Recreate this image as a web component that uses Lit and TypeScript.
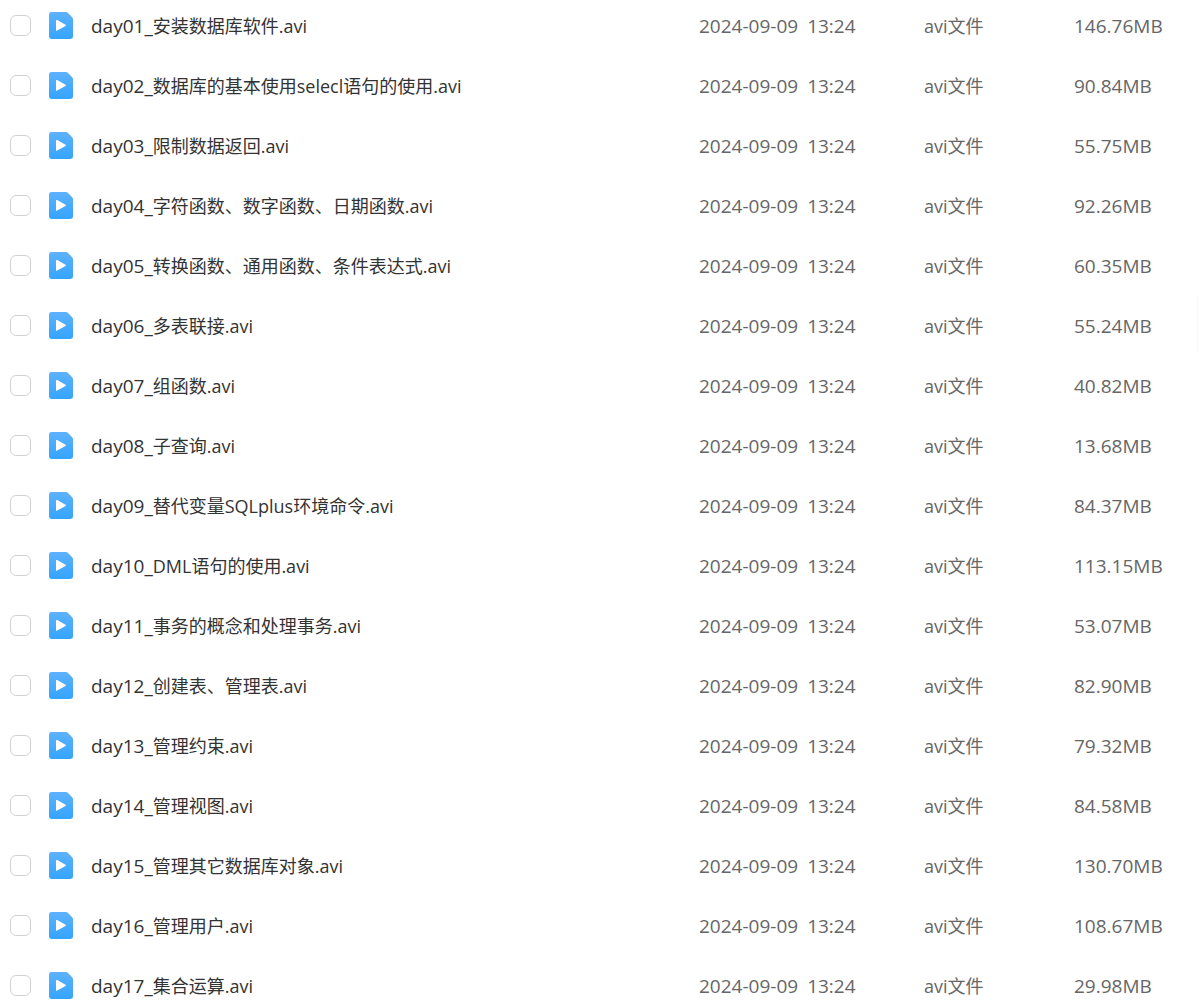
import { LitElement, html, css } from "lit";
import { customElement, state } from "lit/decorators.js";

interface FileEntry {
  day: string;
  title: string;
  date: string;
  time: string;
  kind: string;
  size: string;
}

const entry = (day: string, title: string, size: string): FileEntry => ({
  day,
  title,
  date: "2024-09-09",
  time: "13:24",
  kind: "avi文件",
  size,
});

const FILES: FileEntry[] = [
  entry("day01_", "安装数据库软件.avi", "146.76MB"),
  entry("day02_", "数据库的基本使用selecl语句的使用.avi", "90.84MB"),
  entry("day03_", "限制数据返回.avi", "55.75MB"),
  entry("day04_", "字符函数、数字函数、日期函数.avi", "92.26MB"),
  entry("day05_", "转换函数、通用函数、条件表达式.avi", "60.35MB"),
  entry("day06_", "多表联接.avi", "55.24MB"),
  entry("day07_", "组函数.avi", "40.82MB"),
  entry("day08_", "子查询.avi", "13.68MB"),
  entry("day09_", "替代变量SQLplus环境命令.avi", "84.37MB"),
  entry("day10_", "DML语句的使用.avi", "113.15MB"),
  entry("day11_", "事务的概念和处理事务.avi", "53.07MB"),
  entry("day12_", "创建表、管理表.avi", "82.90MB"),
  entry("day13_", "管理约束.avi", "79.32MB"),
  entry("day14_", "管理视图.avi", "84.58MB"),
  entry("day15_", "管理其它数据库对象.avi", "130.70MB"),
  entry("day16_", "管理用户.avi", "108.67MB"),
  entry("day17_", "集合运算.avi", "29.98MB"),
];

@customElement("video-icon")
export class VideoIcon extends LitElement {
  static styles = css`
    :host { display: block; flex: none; }
    .icon { display: block; width: 24px; height: 27px; }
  `;

  render() {
    return html`
      <svg class="icon" viewBox="0 0 24 27" aria-hidden="true">
        <defs>
          <linearGradient id="sheet" x1="0" y1="0" x2="0" y2="1">
            <stop offset="0" stop-color="#5eb2fd" />
            <stop offset="1" stop-color="#34a4ff" />
          </linearGradient>
        </defs>
        <path
          fill="url(#sheet)"
          d="M2.4 0H17Q17.9 0 18.5.6L23.4 5.4Q24 6 24 6.9V24.6Q24 27 21.6 27H2.4Q0 27 0 24.6V2.4Q0 0 2.4 0Z"
        />
        <path
          fill="#fff"
          d="M7 8.8Q7 7.5 8.2 8.1L16.5 12.7Q17.4 13.3 16.5 13.9L8.2 18.6Q7 19.2 7 17.9Z"
        />
      </svg>
    `;
  }
}

@customElement("app-root")
export class AppRoot extends LitElement {
  static styles = css`
    :host {
      display: block;
      position: relative;
      height: 100vh;
      overflow: hidden;
      background: #fff;
      color: #666;
      font-family: "Open Sans", "Noto Sans CJK SC", sans-serif;
      font-size: 18px;
      line-height: 25px;
    }
    .files {
      width: 100%;
      table-layout: fixed;
      border-collapse: collapse;
    }
    .modified-col { width: 225px; }
    .kind-col { width: 150px; }
    .size-col { width: 124px; }
    .file-cell {
      height: 51px;
      padding: 0 0 9px;
      vertical-align: middle;
    }
    .cell {
      padding: 2px 0 9px;
      text-align: left;
      vertical-align: middle;
      white-space: nowrap;
    }
    .figure { font-size: 19px; }
    .stamp { display: flex; gap: 9px; }
    .file {
      display: flex;
      align-items: center;
      gap: 18px;
      padding-left: 10px;
    }
    .tick {
      appearance: none;
      flex: none;
      box-sizing: border-box;
      width: 21px;
      height: 21px;
      margin: 0;
      border: 1px solid #d2d2d2;
      border-radius: 6px;
      background: #fff;
    }
    .tick:checked { border-color: #34a4ff; background: #34a4ff; }
    .name {
      padding-top: 2px;
      color: #333;
      white-space: nowrap;
    }
    .side-tab {
      position: absolute;
      top: 296px;
      right: 0;
      width: 1px;
      height: 56px;
      background: #f7f7f7;
    }
  `;

  @state() private files = FILES;

  render() {
    return html`
      <table class="files">
        <colgroup>
          <col />
          <col class="modified-col" />
          <col class="kind-col" />
          <col class="size-col" />
        </colgroup>
        <tbody>
          ${this.files.map(
            (file, i) => html`
              <tr>
                <td class="file-cell">
                  <div class="file">
                    <input class="tick" type="checkbox" id="file-${i}" />
                    <video-icon></video-icon>
                    <label class="name" for="file-${i}"
                      ><span class="figure">${file.day}</span>${file.title}</label
                    >
                  </div>
                </td>
                <td class="cell figure">
                  <time class="stamp" datetime="${file.date}T${file.time}">
                    <span>${file.date}</span> <span>${file.time}</span>
                  </time>
                </td>
                <td class="cell">${file.kind}</td>
                <td class="cell figure">${file.size}</td>
              </tr>
            `
          )}
        </tbody>
      </table>
      <div class="side-tab"></div>
    `;
  }
}
